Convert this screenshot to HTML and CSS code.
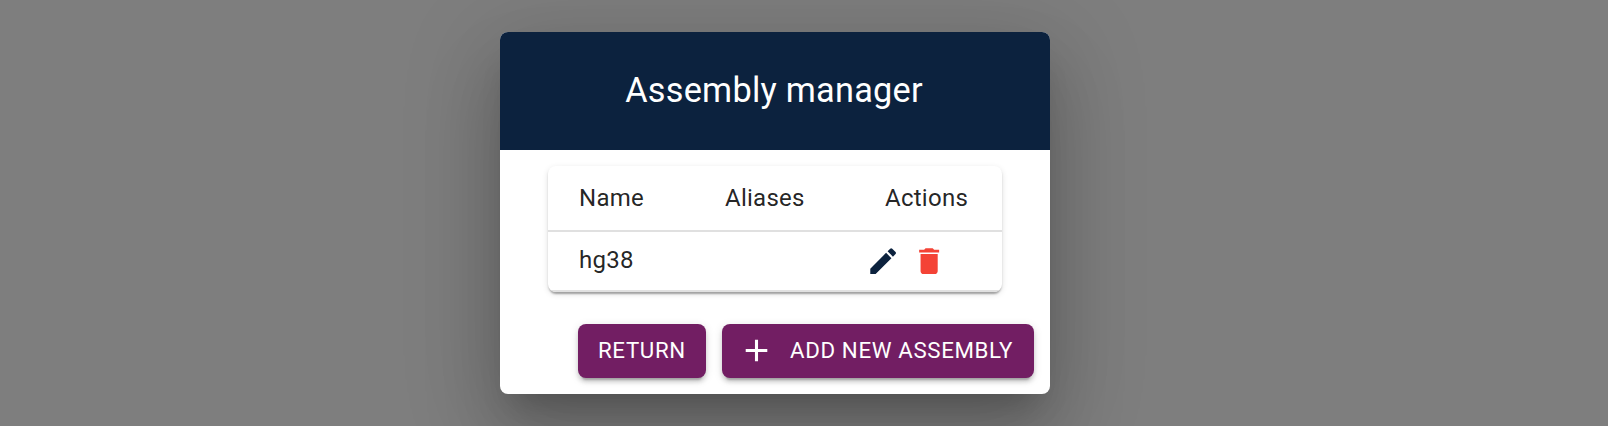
FILE: index.html
```
<!DOCTYPE html>
<html lang="en">
<head>
<meta charset="utf-8">
<title>Assembly manager</title>
<link rel="stylesheet" href="styles.css">
</head>
<body>
<main class="dialog">
  <header class="dialog-title"><h2>Assembly manager</h2></header>
  <div class="table">
    <div class="row head"><span>Name</span><span>Aliases</span><span>Actions</span></div>
    <div class="row body"><span class="name">hg38</span><span></span>
      <span class="actions">
        <svg class="edit" viewBox="0 0 24 24"><path d="M3 17.25V21h3.75L17.81 9.94l-3.75-3.75L3 17.25zM20.71 7.04c.39-.39.39-1.02 0-1.41l-2.34-2.34a.9959.9959 0 0 0-1.41 0l-1.83 1.83 3.75 3.75 1.83-1.83z"/></svg>
        <svg class="delete" viewBox="0 0 24 24"><path d="M6 19c0 1.1.9 2 2 2h8c1.1 0 2-.9 2-2V7H6v12zM19 4h-3.5l-1-1h-5l-1 1H5v2h14V4z"/></svg>
      </span>
    </div>
  </div>
  <footer class="buttons">
    <button class="button return">RETURN</button>
    <button class="button add"><svg viewBox="0 0 24 24"><path d="M19 13h-6v6h-2v-6H5v-2h6V5h2v6h6v2z"/></svg><span>ADD NEW ASSEMBLY</span></button>
  </footer>
</main>
</body>
</html>
```
FILE: styles.css
```
* { box-sizing: border-box; }
body {
  margin: 0;
  height: 426px;
  padding: 32px 0 0 500px;
  overflow: hidden;
  background: #7e7e7e;
  font-family: Roboto, sans-serif;
  color: rgba(0, 0, 0, 0.87);
}
.dialog {
  width: 550px;
  height: 362px;
  border-radius: 8px;
  background: #fff;
  box-shadow: 0 22px 30px -14px rgba(0,0,0,.2), 0 48px 76px 6px rgba(0,0,0,.14), 0 18px 92px 16px rgba(0,0,0,.12);
}
.dialog-title {
  height: 118px;
  display: flex;
  align-items: center;
  justify-content: center;
  padding: 0 2px 2px 0;
  border-radius: 8px 8px 0 0;
  background: #0c223e;
  color: #fff;
}
.dialog-title h2 {
  margin: 0;
  font-size: 34.29px;
  font-weight: 400;
  line-height: 1.6;
  letter-spacing: 0.0075em;
}
.table {
  width: 454px;
  margin: 16px 48px 0;
  border-radius: 8px;
  overflow: hidden;
  box-shadow: 0 4px 2px -2px rgba(0,0,0,.2), 0 2px 2px 0 rgba(0,0,0,.14), 0 2px 6px 0 rgba(0,0,0,.12);
}
.row {
  display: grid;
  grid-template-columns: 146px 160px 1fr;
  padding-left: 31px;
  align-items: center;
  border-bottom: 2px solid #e0e0e0;
  font-size: 24px;
  line-height: 34px;
  letter-spacing: 0.01071em;
}
.head { height: 66px; }
.body { height: 60px; }
.name { padding-bottom: 2px; }
.actions {
  display: flex;
  gap: 12px;
  margin-left: -19px;
}
.actions svg { width: 34.28px; height: 34.28px; }
.edit { fill: #0c223e; }
.delete { fill: #f44336; }
.buttons {
  display: flex;
  justify-content: flex-end;
  gap: 16px;
  padding: 32px 16px 16px;
}
.button {
  height: 54px;
  display: flex;
  align-items: center;
  border: 0;
  border-radius: 8px;
  padding: 0 20px 2px;
  background: #721e63;
  color: #fff;
  font: 400 22.29px Roboto, sans-serif;
  letter-spacing: 0.02857em;
  white-space: nowrap;
  box-shadow: 0 6px 2px -4px rgba(0,0,0,.2), 0 4px 4px 0 rgba(0,0,0,.14), 0 2px 10px 0 rgba(0,0,0,.12);
}
.return { width: 128px; }
.add { width: 312px; padding: 0 0 2px 15.5px; gap: 15.5px; }
.add svg { width: 37px; height: 37px; fill: #fff; }
```
